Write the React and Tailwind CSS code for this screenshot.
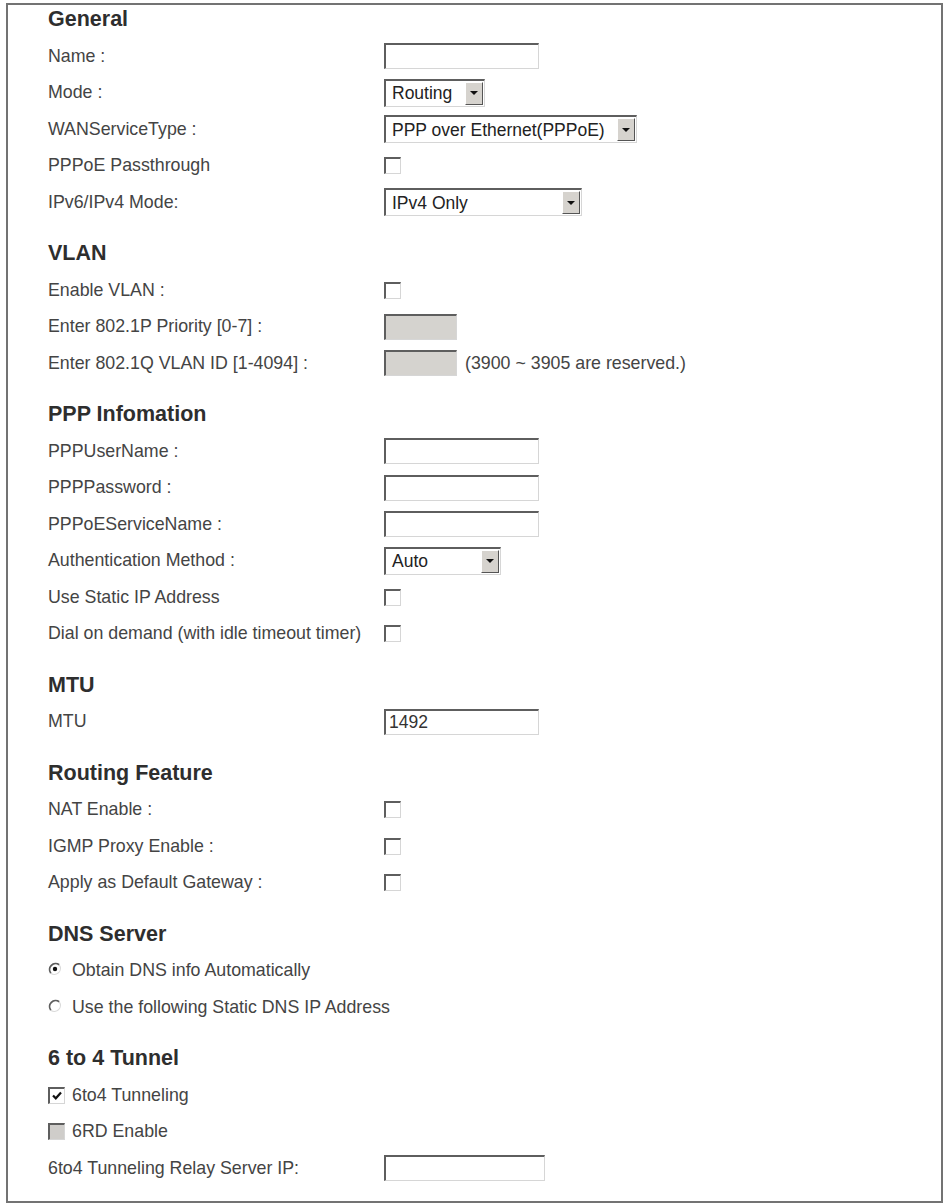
import React from 'react';

// classic inset field border: dark top/left, light bottom/right
const inset =
  'border-t-2 border-l-2 border-b border-r border-t-[#5e5e5e] border-l-[#5e5e5e] border-b-[#d6d6d6] border-r-[#d6d6d6]';

const TextBox = ({ width, value = '', disabled = false }) => (
  <input
    type="text"
    readOnly
    defaultValue={value}
    className={`${width} h-[26px] ${inset} ${disabled ? 'bg-[#d5d3cf]' : 'bg-white'} pl-[3px] text-[17.5px] text-[#333] outline-none`}
  />
);

const Select = ({ width, value }) => (
  <div className={`${width} h-[28px] flex items-stretch ${inset} bg-white`}>
    <span className="flex-1 flex items-center pl-[6px] text-[17.5px] text-[#222]">{value}</span>
    <span className="w-[18px] my-[1px] mr-[1px] flex items-center justify-center bg-[#d6d3ce] border border-t-white border-l-white border-b-[#555] border-r-[#555]">
      <svg width="8" height="4" viewBox="0 0 8 4">
        <path d="M0 0h8L4 4z" fill="#111" />
      </svg>
    </span>
  </div>
);

const Checkbox = ({ checked = false, disabled = false }) => (
  <span
    className={`w-[17px] h-[17px] shrink-0 flex items-center justify-center ${inset} ${disabled ? 'bg-[#cfcdca]' : 'bg-white'}`}
  >
    {checked && (
      <svg width="10" height="9" viewBox="0 0 10 9">
        <path d="M1 4.5l2.8 2.8L9 1.5" fill="none" stroke="#111" strokeWidth="2.2" />
      </svg>
    )}
  </span>
);

const Radio = ({ checked = false }) => (
  <svg width="14" height="14" viewBox="0 0 14 14" className="shrink-0 -mt-[3px]">
    <circle cx="7" cy="7" r="6" fill="#fff" />
    <path d="M2.8 11.2A6 6 0 0 1 11.2 2.8" fill="none" stroke="#5e5e5e" strokeWidth="1.8" />
    <path d="M11.2 2.8A6 6 0 0 1 2.8 11.2" fill="none" stroke="#dadada" strokeWidth="1.2" />
    {checked && <circle cx="7" cy="7" r="2.2" fill="#111" />}
  </svg>
);

const Heading = ({ children, first = false }) => (
  <div className={`h-[33px] leading-[28px] text-[21.5px] font-bold text-[#2e2e2e] ${first ? '' : 'mt-[18.5px]'}`}>
    {children}
  </div>
);

const Row = ({ label, children }) => (
  <div className="h-[36.5px] flex items-center">
    <div className="w-[336px] shrink-0 text-[17.8px] text-[#444]">{label}</div>
    <div className="flex items-center">{children}</div>
  </div>
);

const Option = ({ control, label }) => (
  <div className="h-[36.5px] flex items-center">
    <span className="w-[24px] flex">{control}</span>
    <span className="text-[17.8px] text-[#444]">{label}</span>
  </div>
);

export default function App() {
  return (
    <div className="min-h-screen bg-white pt-[3px] pl-[6px] font-['Liberation_Sans',Arial,sans-serif]">
      <div className="w-[937px] h-[1200px] border-2 border-[#737373] pl-[40px]">
        <Heading first>General</Heading>
        <Row label="Name :">
          <TextBox width="w-[155px]" />
        </Row>
        <Row label="Mode :">
          <Select width="w-[101px]" value="Routing" />
        </Row>
        <Row label="WANServiceType :">
          <Select width="w-[253px]" value="PPP over Ethernet(PPPoE)" />
        </Row>
        <Row label="PPPoE Passthrough">
          <Checkbox />
        </Row>
        <Row label="IPv6/IPv4 Mode:">
          <Select width="w-[198px]" value="IPv4 Only" />
        </Row>

        <Heading>VLAN</Heading>
        <Row label="Enable VLAN :">
          <Checkbox />
        </Row>
        <Row label="Enter 802.1P Priority [0-7] :">
          <TextBox width="w-[73px]" disabled />
        </Row>
        <Row label="Enter 802.1Q VLAN ID [1-4094] :">
          <TextBox width="w-[73px]" disabled />
          <span className="ml-[8px] text-[17.8px] text-[#444]">(3900 ~ 3905 are reserved.)</span>
        </Row>

        <Heading>PPP Infomation</Heading>
        <Row label="PPPUserName :">
          <TextBox width="w-[155px]" />
        </Row>
        <Row label="PPPPassword :">
          <TextBox width="w-[155px]" />
        </Row>
        <Row label="PPPoEServiceName :">
          <TextBox width="w-[155px]" />
        </Row>
        <Row label="Authentication Method :">
          <Select width="w-[117px]" value="Auto" />
        </Row>
        <Row label="Use Static IP Address">
          <Checkbox />
        </Row>
        <Row label="Dial on demand (with idle timeout timer)">
          <Checkbox />
        </Row>

        <Heading>MTU</Heading>
        <Row label="MTU">
          <TextBox width="w-[155px]" value="1492" />
        </Row>

        <Heading>Routing Feature</Heading>
        <Row label="NAT Enable :">
          <Checkbox />
        </Row>
        <Row label="IGMP Proxy Enable :">
          <Checkbox />
        </Row>
        <Row label="Apply as Default Gateway :">
          <Checkbox />
        </Row>

        <Heading>DNS Server</Heading>
        <Option control={<Radio checked />} label="Obtain DNS info Automatically" />
        <Option control={<Radio />} label="Use the following Static DNS IP Address" />

        <Heading>6 to 4 Tunnel</Heading>
        <Option control={<Checkbox checked />} label="6to4 Tunneling" />
        <Option control={<Checkbox disabled />} label="6RD Enable" />
        <Row label="6to4 Tunneling Relay Server IP:">
          <TextBox width="w-[161px]" />
        </Row>
      </div>
    </div>
  );
}
